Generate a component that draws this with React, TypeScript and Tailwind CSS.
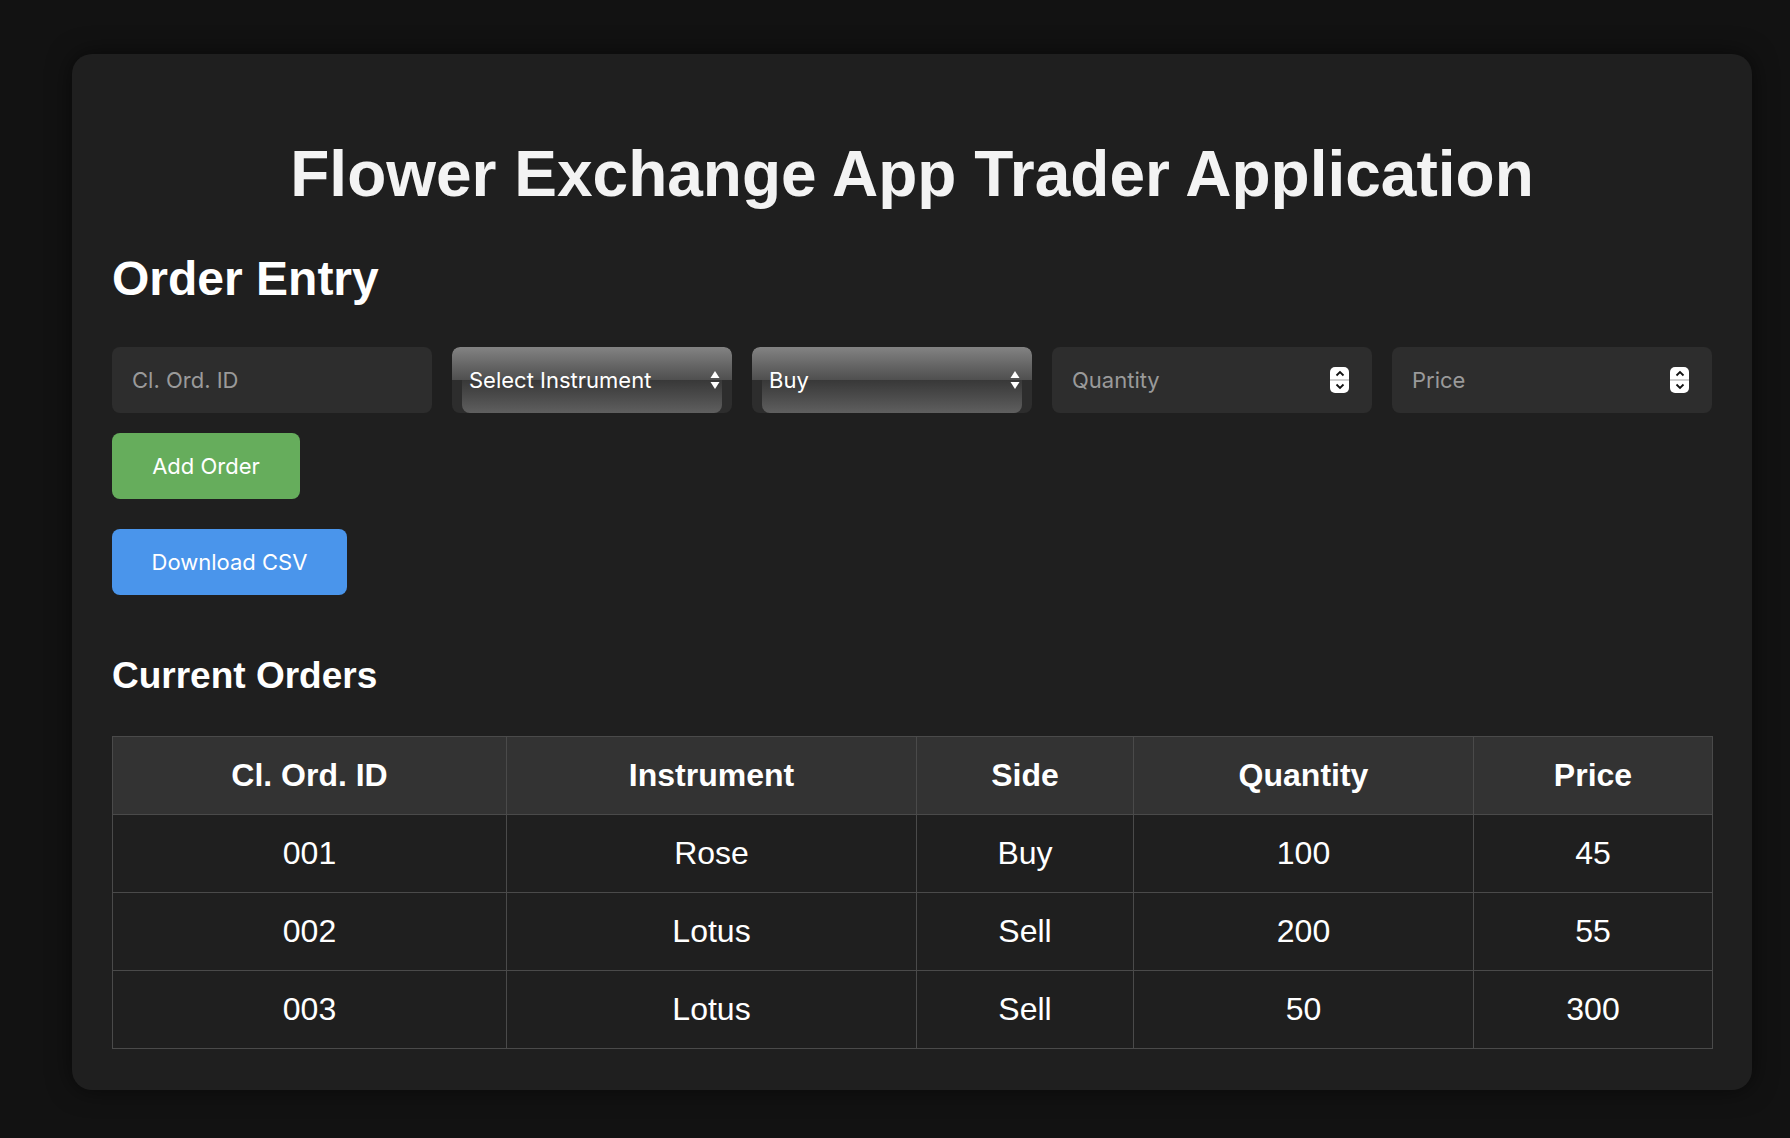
import { useState } from 'react';

type Order = { id: string; instrument: string; side: string; quantity: number; price: number };

const orders: Order[] = [
  { id: '001', instrument: 'Rose', side: 'Buy', quantity: 100, price: 45 },
  { id: '002', instrument: 'Lotus', side: 'Sell', quantity: 200, price: 55 },
  { id: '003', instrument: 'Lotus', side: 'Sell', quantity: 50, price: 300 },
];

const uiFont = "font-['Inter','Noto_Sans',sans-serif]";

function SelectArrows() {
  return (
    <svg width="10" height="20" viewBox="0 0 10 20" className="shrink-0">
      <path d="M5 1 L9.5 8 L0.5 8 Z" fill="white" />
      <path d="M5 19 L9.5 12 L0.5 12 Z" fill="white" />
    </svg>
  );
}

function GlossySelect({ label }: { label: string }) {
  return (
    <div className="relative w-[280px] h-[66px] rounded-lg bg-[#2d2d2d] overflow-hidden">
      <div className="h-[33px] rounded-t-lg bg-gradient-to-b from-[#838383] to-[#4f4f4f]" />
      <div className="mx-[10px] h-[33px] rounded-b-lg bg-gradient-to-b from-[#383838] to-[#5f5f5f]" />
      <div className={`absolute inset-0 flex items-center justify-between pl-[17px] pr-[12px] text-[22px] text-white ${uiFont}`}>
        <span>{label}</span>
        <SelectArrows />
      </div>
    </div>
  );
}

function Spinner() {
  return (
    <div className="w-[19px] h-[26px] rounded-[5px] bg-white flex flex-col items-center justify-between py-[3px] shrink-0">
      <svg width="10" height="7" viewBox="0 0 10 7">
        <path d="M1.5 5.5 L5 2 L8.5 5.5" stroke="#111" strokeWidth="1.8" fill="none" />
      </svg>
      <div className="w-full h-[2px] bg-[#cfcfcf]" />
      <svg width="10" height="7" viewBox="0 0 10 7">
        <path d="M1.5 1.5 L5 5 L8.5 1.5" stroke="#111" strokeWidth="1.8" fill="none" />
      </svg>
    </div>
  );
}

function TextField({ placeholder, number }: { placeholder: string; number?: boolean }) {
  const [value, setValue] = useState('');
  return (
    <div className="w-[320px] h-[66px] rounded-lg bg-[#2d2d2d] flex items-center pl-[20px] pr-[23px]">
      <input
        value={value}
        onChange={(e) => setValue(e.target.value)}
        placeholder={placeholder}
        className={`flex-1 min-w-0 bg-transparent outline-none text-[22px] text-white placeholder:text-[#9a9a9a] ${uiFont}`}
      />
      {number && <Spinner />}
    </div>
  );
}

export default function App() {
  const cellBase = 'border border-[#4a4a4a] py-[20px] leading-[37px] text-center';
  return (
    <div className="min-h-[1138px] bg-[#121212] pt-[54px] pb-[48px] font-['Liberation_Sans','Arial',sans-serif]">
      <div className="ml-[72px] w-[1680px] rounded-[20px] bg-[#1f1f1f] px-[40px] pt-[40px] pb-[41px] shadow-[0_0_24px_rgba(0,0,0,0.55)]">
        <h1 className="mt-[43px] text-center text-[64px] leading-[74px] font-bold text-[#f3f3f3]">
          Flower Exchange App Trader Application
        </h1>
        <h2 className="mt-[40px] text-[48px] leading-[55px] font-bold text-white">Order Entry</h2>

        <div className="mt-[41px] flex gap-[20px]">
          <TextField placeholder="Cl. Ord. ID" />
          <GlossySelect label="Select Instrument" />
          <GlossySelect label="Buy" />
          <TextField placeholder="Quantity" number />
          <TextField placeholder="Price" number />
        </div>

        <button className={`mt-[20px] block h-[66px] w-[188px] rounded-lg bg-[#66ad5c] text-[22px] text-white ${uiFont}`}>
          Add Order
        </button>
        <button className={`mt-[30px] block h-[66px] w-[235px] rounded-lg bg-[#4a95eb] text-[22px] text-white ${uiFont}`}>
          Download CSV
        </button>

        <h3 className="mt-[59px] text-[37px] leading-[43px] font-bold text-white">Current Orders</h3>

        <table className="mt-[39px] w-[1600px] table-fixed border-collapse border border-[#4a4a4a] text-[32px] text-white">
          <colgroup>
            <col className="w-[394px]" />
            <col className="w-[410px]" />
            <col className="w-[217px]" />
            <col className="w-[340px]" />
            <col className="w-[239px]" />
          </colgroup>
          <thead>
            <tr className="bg-[#333333]">
              {['Cl. Ord. ID', 'Instrument', 'Side', 'Quantity', 'Price'].map((h) => (
                <th key={h} className={`${cellBase} font-bold`}>
                  {h}
                </th>
              ))}
            </tr>
          </thead>
          <tbody>
            {orders.map((o) => (
              <tr key={o.id}>
                <td className={cellBase}>{o.id}</td>
                <td className={cellBase}>{o.instrument}</td>
                <td className={cellBase}>{o.side}</td>
                <td className={cellBase}>{o.quantity}</td>
                <td className={cellBase}>{o.price}</td>
              </tr>
            ))}
          </tbody>
        </table>
      </div>
    </div>
  );
}
